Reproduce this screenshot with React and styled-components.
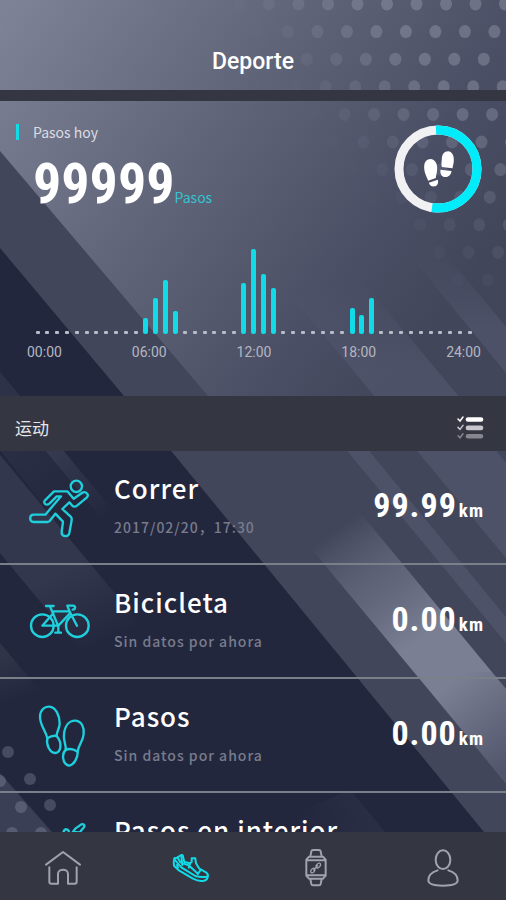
import React from 'react';
import styled, { createGlobalStyle } from 'styled-components';

const GlobalStyle = createGlobalStyle`
  :root {
    --color-accent: #12dbe8;
    --color-bar: #343642;
    --color-white: #fff;
    --color-muted: #787c8c;
    --font-cjk: 'Noto Sans CJK SC', 'Noto Sans', sans-serif;
    --font-digits: 'Roboto Condensed', 'Noto Sans CJK SC', sans-serif;
  }

  * {
    box-sizing: border-box;
  }

  body {
    margin: 0;
    background-color: #23273e;
    font-family: var(--font-cjk);
    color: var(--color-white);
  }

  h1, h2, h3, p, ul {
    margin: 0;
    padding: 0;
  }
`;

const Wrapper = styled.div`
  position: relative;
  display: flex;
  flex-direction: column;
  width: 100%;
  height: 100vh;
  overflow: hidden;
`;

const Backdrop = styled.svg`
  position: absolute;
  top: 0;
  left: 0;
  width: 100%;
  height: 100%;
  z-index: -1;
`;

const Header = styled.header`
  flex: none;
  display: flex;
  justify-content: center;
  padding: 48px 16px 14px;
  border-bottom: 11px solid var(--color-bar);
`;

const Title = styled.h1`
  font-family: Roboto, sans-serif;
  font-size: 23px;
  font-weight: 500;
  line-height: 28px;
`;

const Summary = styled.section`
  flex: none;
  display: flex;
  flex-direction: column;
  padding: 23px 23px 35px 16px;
`;

const SummaryTop = styled.div`
  display: flex;
  justify-content: space-between;
  align-items: flex-start;
  height: 124px;
`;

const SummaryLabel = styled.h2`
  display: flex;
  align-items: center;
  gap: 14px;
  font-size: 14px;
  font-weight: 400;
  line-height: 16px;
  color: #dcdde3;

  &::before {
    content: '';
    width: 3px;
    height: 16px;
    background-color: var(--color-accent);
  }
`;

const Steps = styled.p`
  display: flex;
  align-items: baseline;
  padding: 12px 0 0 17px;
  font-family: var(--font-digits);
  font-size: 56px;
  font-weight: 700;
  line-height: 64px;
`;

const StepsUnit = styled.span`
  font-family: var(--font-cjk);
  font-size: 14px;
  font-weight: 400;
  line-height: 20px;
  color: #35c3cf;
`;

const Ring = styled.svg`
  flex: none;
  width: 90px;
  height: 90px;
`;

const Chart = styled.div`
  display: flex;
  justify-content: space-between;
  align-items: flex-end;
  height: 86px;
  padding: 0 10px 0 19px;
`;

const Slot = styled.span`
  display: flex;
  justify-content: center;
  align-items: flex-end;
  width: 5px;
`;

const Bar = styled.span`
  width: 5px;
  border-radius: 2px;
  background-color: var(--color-accent);
`;

const Dot = styled.span`
  width: 4px;
  height: 3px;
  border-radius: 1px;
  background-color: #b9bbc6;
`;

const Hours = styled.div`
  display: flex;
  justify-content: space-between;
  padding: 9px 2px 0 11px;
  font-family: Roboto, sans-serif;
  font-size: 14px;
  line-height: 18px;
  color: #b4b6c0;
`;

const SectionBar = styled.div`
  flex: none;
  display: flex;
  justify-content: space-between;
  align-items: center;
  min-height: 55px;
  padding: 8px 22px 0 15px;
  background-color: var(--color-bar);
`;

const SectionTitle = styled.h2`
  font-size: 17px;
  font-weight: 400;
  line-height: 24px;
  color: #e6e6ea;
`;

const IconButton = styled.button`
  display: flex;
  padding: 0;
  border: none;
  background: none;
  cursor: pointer;
`;

const List = styled.ul`
  flex: 1;
  min-height: 0;
  overflow-y: auto;
  scrollbar-width: none;
  list-style: none;
`;

const Row = styled.li`
  display: flex;
  align-items: center;
  height: 114px;
  padding-right: 22px;
  border-bottom: 2px solid #7b8088;
`;

const RowIcon = styled.svg`
  flex: none;
  width: 64px;
  height: 64px;
  margin: 0 22px 0 28px;
  fill: none;
  stroke: #1fd0dc;
  stroke-width: 7;
  stroke-linecap: round;
  stroke-linejoin: round;
`;

const RowText = styled.div`
  flex: 1;
  align-self: flex-start;
  padding-top: 17px;
`;

const RowTitle = styled.h3`
  font-size: 26px;
  font-weight: 500;
  line-height: 40px;
  letter-spacing: 1px;
`;

const RowNote = styled.p`
  padding-top: 7px;
  font-size: 14px;
  font-weight: 500;
  line-height: 24px;
  letter-spacing: 1px;
  color: var(--color-muted);
`;

const Value = styled.p`
  padding-top: 2px;
  font-family: var(--font-digits);
  font-size: 34px;
  font-weight: 700;
  line-height: 40px;
  letter-spacing: 1px;
`;

const Unit = styled.span`
  padding-left: 2px;
  font-size: 19px;
`;

const Nav = styled.nav`
  flex: none;
  display: grid;
  grid-template-columns: repeat(4, 1fr);
  height: 68px;
  padding: 4px 0 0;
  background-color: var(--color-bar);
`;

const NavLink = styled.a`
  display: flex;
  align-items: center;
  justify-content: center;
  color: ${({ $active }) => ($active ? 'var(--color-accent)' : '#a0a3ae')};
`;

const NavIcon = styled.svg`
  width: 40px;
  height: 40px;
  fill: none;
  stroke: currentColor;
  stroke-width: 6;
  stroke-linecap: round;
  stroke-linejoin: round;
`;

const activity = {
  11: 16, 12: 36, 13: 54, 14: 23,
  21: 51, 22: 85, 23: 60, 24: 46,
  32: 26, 33: 19, 34: 36,
};
const slots = Array.from({ length: 45 }, (_, i) => activity[i] || 0);
const hours = ['00:00', '06:00', '12:00', '18:00', '24:00'];

// halftone pattern, each line shifted left and starting further right
const dots = [];
for (let row = 0; row < 11; row++) {
  const y = 4 + row * 27.6;
  const start = 225 + row * 20;
  for (let col = -4; col < 10; col++) {
    const x = 505 - row * 10.6 - col * 29.5;
    if (x > start && x < 515) {
      const strength = row < 4 ? 0.36 : 0.32 - (row - 4) * 0.03;
      dots.push({ x, y, o: Math.min(1, (x - start) / 150) * strength });
    }
  }
}
const cornerDots = [[8, 752], [0, 781], [30, 779], [21, 807], [50, 805], [12, 833], [41, 833]];

const Scene = () => (
  <Backdrop viewBox='0 0 506 900' preserveAspectRatio='none' aria-hidden='true'>
    <defs>
      <linearGradient id='sky' gradientUnits='userSpaceOnUse' x1='0' y1='20' x2='430' y2='330'>
        <stop offset='0' stopColor='#7e8296' />
        <stop offset='0.45' stopColor='#606478' />
        <stop offset='0.8' stopColor='#4a4f65' />
        <stop offset='1' stopColor='#42465b' />
      </linearGradient>
      <linearGradient id='beam' gradientUnits='userSpaceOnUse' x1='350' y1='520' x2='450' y2='660'>
        <stop offset='0' stopColor='#7d8195' stopOpacity='0' />
        <stop offset='0.45' stopColor='#6a6e83' stopOpacity='0.8' />
        <stop offset='0.8' stopColor='#7b7f94' />
        <stop offset='1' stopColor='#7b7f94' />
      </linearGradient>
      <linearGradient id='beamEnd' gradientUnits='userSpaceOnUse' x1='455' y1='680' x2='520' y2='760'>
        <stop offset='0' stopColor='#50556b' stopOpacity='0' />
        <stop offset='1' stopColor='#50556b' />
      </linearGradient>
      <linearGradient id='streak' gradientUnits='userSpaceOnUse' x1='0' y1='280' x2='0' y2='370'>
        <stop offset='0' stopColor='#545970' stopOpacity='0' />
        <stop offset='1' stopColor='#545970' stopOpacity='0.6' />
      </linearGradient>
      <linearGradient id='streakRight' gradientUnits='userSpaceOnUse' x1='0' y1='250' x2='0' y2='330'>
        <stop offset='0' stopColor='#545970' stopOpacity='0' />
        <stop offset='1' stopColor='#545970' stopOpacity='0.6' />
      </linearGradient>
      <linearGradient id='fadeDown' gradientUnits='userSpaceOnUse' x1='20' y1='500' x2='90' y2='650'>
        <stop offset='0' stopColor='#33374d' />
        <stop offset='0.5' stopColor='#33374d' />
        <stop offset='1' stopColor='#33374d' stopOpacity='0' />
      </linearGradient>
      <linearGradient id='fadeEdge' gradientUnits='userSpaceOnUse' x1='0' y1='452' x2='70' y2='520'>
        <stop offset='0' stopColor='#2b2f45' />
        <stop offset='1' stopColor='#2b2f45' stopOpacity='0' />
      </linearGradient>
      <linearGradient id='fadeThin' gradientUnits='userSpaceOnUse' x1='50' y1='452' x2='105' y2='520'>
        <stop offset='0' stopColor='#363a50' />
        <stop offset='1' stopColor='#363a50' stopOpacity='0' />
      </linearGradient>
      <linearGradient id='fadeLow' gradientUnits='userSpaceOnUse' x1='0' y1='660' x2='15' y2='700'>
        <stop offset='0' stopColor='#303449' />
        <stop offset='1' stopColor='#303449' stopOpacity='0' />
      </linearGradient>
      <linearGradient id='fadeFoot' gradientUnits='userSpaceOnUse' x1='370' y1='815' x2='300' y2='835'>
        <stop offset='0' stopColor='#2a2e45' />
        <stop offset='1' stopColor='#2a2e45' stopOpacity='0' />
      </linearGradient>
    </defs>
    <rect width='506' height='430' fill='url(#sky)' />
    <path d='M293 298 L358 276 L460 398 L376 398 Z' fill='url(#streak)' />
    <path d='M406 250 L440 247 L506 327 V373 Z' fill='url(#streakRight)' />
    <path d='M0 151 L208 396 L240 430 H0 Z' fill='#42465b' />
    <rect y='430' width='506' height='470' fill='#42465b' />
    <path d='M348 430 H370 V452 L506 617 V643 L348 452 Z' fill='#4e5268' />
    <path d='M418 430 H497 V452 L506 463 V558 L418 452 Z' fill='#4e5268' />
    <path d='M310 452 L506 689 V783 L231 452 Z' fill='url(#beam)' />
    <path d='M410 670 L492 672 L506 689 V783 Z' fill='url(#beamEnd)' />
    <path d='M0 248 L124 396 L172 452 L484 832 H0 Z' fill='#23273e' />
    <path d='M0 372 L22 398 H0 Z' fill='#2e3248' />
    <path d='M0 450 H47 L107 525 H60 Z' fill='url(#fadeEdge)' />
    <path d='M45 450 H63 L125 525 H107 Z' fill='url(#fadeThin)' />
    <path d='M0 455 L170 660 L105 680 L0 553 Z' fill='url(#fadeDown)' />
    <path d='M0 643 L60 715 L0 720 Z' fill='url(#fadeLow)' />
    <path d='M350 790 L385 832 H250 Z' fill='url(#fadeFoot)' />
    <path d='M0 773 L52 832 H0 Z' fill='#3b3f55' />
    {dots.map(({ x, y, o }) => (
      <ellipse key={`${x}-${y}`} cx={x} cy={y} rx='6' ry='6.5' fill='#a5a9bd' opacity={o} />
    ))}
    {cornerDots.map(([x, y]) => (
      <circle key={`${x}-${y}`} cx={x} cy={y} r='6' fill='#a5a9bd' opacity='0.28' />
    ))}
  </Backdrop>
);

const StepsRing = () => (
  <Ring viewBox='0 0 90 90' role='img' aria-label='Pasos'>
    <circle cx='45' cy='45' r='39' fill='none' stroke='#f1f1f3' strokeWidth='9' />
    <path d='M43 6 A39 39 0 1 1 39 83.500' fill='none' stroke='#00ecfb' strokeWidth='9' />
    <g fill='#fff' transform='translate(-12.500 -13) scale(.3333)'>
      <path d='M131 168 C131 152 139 144 150 144 C164 145 171 158 170 174 C170 186 166 194 166 201 L143 209 C138 196 131 185 131 168 Z' />
      <path d='M145 215 L172 206 C175 216 170 225 162 226 C153 227 147 223 145 215 Z' />
      <path d='M184 145 C184 130 191 121 203 121 C214 122 221 133 220 148 C220 158 217 165 216 172 L184 168 C182 160 183 153 184 145 Z' />
      <path d='M180 176 L213 180 C212 191 204 199 194 198 C184 198 178 188 180 176 Z' />
    </g>
  </Ring>
);

const RunIcon = () => (
  <RowIcon viewBox='54 45 192 192'>
    <circle cx='199' cy='79' r='17' />
    <path d='M105 121 L132 94 H172 L191 116 L217 98 C228 93 239 104 230 113 L201 137 Q193 143 186 136 L178 127 L157 147 L182 170 Q186 174 185 181 L178 219 C175 233 154 231 155 216 L159 185 L136 161 L119 183 Q116 186 112 186 H71 C57 186 57 164 71 164 H106 L153 109 H140 L119 130 C109 139 98 130 105 121 Z' />
  </RowIcon>
);

const BikeIcon = () => (
  <RowIcon viewBox='54 -2 192 192'>
    <circle cx='97' cy='108' r='34' />
    <circle cx='202' cy='108' r='34' />
    <path d='M108 49 H131 M120 50 L128 69 L145 110 M128 65 H178 M130 71 L97 108 H145 L180 71 M136 129 H153 M145 110 V128' />
    <path d='M178 64 L172 48 H189 C198 48 197 59 188 60 M178 64 L201 108' />
  </RowIcon>
);

const FeetIcon = () => (
  <RowIcon viewBox='54 337 192 192'>
    <path d='M112 443 C108 420 89 404 90 377 C91 358 103 347 118 348 C138 350 149 375 149 398 C149 415 139 424 140 436 C132 434 121 437 112 443 Z' />
    <path d='M112 443 C108 462 119 486 136 487 C153 485 158 457 140 436' />
    <path d='M167 478 C169 459 159 451 162 430 C165 405 178 389 197 390 C215 392 223 409 221 430 C219 453 205 463 203 483 C192 476 177 473 167 478 Z' />
    <path d='M167 478 C155 488 156 520 177 525 C193 523 204 499 203 483' />
  </RowIcon>
);

const TreadmillIcon = () => (
  <RowIcon viewBox='84 47 192 192'>
    <path d='M185 114 L190 93 C194 80 205 82 207 92 L207 108 L226 82 L244 69 C253 66 256 74 250 80 L228 106 L216 122 M222 90 L238 94' />
  </RowIcon>
);

const ListIcon = () => (
  <svg width='28' height='24' viewBox='0 0 28 24' fill='none' strokeLinecap='round'>
    {['#fff', '#c6c6cc', '#858690'].map((color, i) => (
      <g key={color} stroke={color} transform={`translate(0 ${i * 8.4})`}>
        <path d='M2 3 L4 5 L7 1' strokeWidth='1.500' />
        <path d='M12 3.500 H25' strokeWidth='4.600' />
      </g>
    ))}
  </svg>
);

const HomeIcon = () => (
  <NavIcon viewBox='132 143 120 120'>
    <path d='M141 193 L192 155 L243 193 M151 201 V244 Q151 250 157 250 H177 V221 C177 204 207 204 207 221 V250 H227 Q233 250 233 244 V201' />
  </NavIcon>
);

const ShoeIcon = () => (
  <NavIcon viewBox='514 139 120 120'>
    <path d='M527 170 L535 168 L548 160 L552 161 L557 181 L574 185 L579 181 V170 L590 170 L592 185 L602 201 L622 212 Q630 217 627 227 Q623 238 611 238 Q598 239 583 231 L542 207 L526 192 Q524 181 527 170 Z' />
    <path d='M528 174 L548 197 L590 223 Q607 228 625 225 M537 168 L545 182 L570 191 L588 207 L598 217 M548 165 L551 190 M574 187 L570 198 M606 205 L598 216 M535 190 L538 198' />
  </NavIcon>
);

const WatchIcon = () => (
  <NavIcon viewBox='138 141 120 120'>
    <path d='M181 166 L184 151 Q185 147 189 147 H207 Q211 147 212 151 L215 166 M181 234 L184 249 Q185 253 189 253 H207 Q211 253 212 249 L215 234' />
    <path d='M177 167 H219 L227 176 V224 L219 233 H177 L169 224 V176 Z M171 178 H225 M171 223 H225' />
    <path d='M184 215 C177 209 190 199 193 202 C199 206 189 219 184 215 Z M200 200 C193 194 206 184 210 187 C216 192 205 204 200 200 Z M191 207 L203 194' strokeWidth='4' />
  </NavIcon>
);

const UserIcon = () => (
  <NavIcon viewBox='521 140 120 120'>
    <ellipse cx='581' cy='175' rx='22' ry='28' />
    <path d='M565 207 C545 213 537 221 537 237 C537 248 557 253 581 253 C605 253 625 248 625 237 C625 221 617 213 597 207' />
  </NavIcon>
);

const sports = [
  { title: 'Correr', note: '2017/02/20，17:30', value: '99.99', Icon: RunIcon },
  { title: 'Bicicleta', note: 'Sin datos por ahora', value: '0.00', Icon: BikeIcon },
  { title: 'Pasos', note: 'Sin datos por ahora', value: '0.00', Icon: FeetIcon },
  { title: 'Pasos en interior', Icon: TreadmillIcon },
];

const tabs = [
  { label: 'Inicio', href: '#inicio', Icon: HomeIcon },
  { label: 'Deporte', href: '#deporte', Icon: ShoeIcon, active: true },
  { label: 'Reloj', href: '#reloj', Icon: WatchIcon },
  { label: 'Perfil', href: '#perfil', Icon: UserIcon },
];

const App = () => {
  return (
    <>
      <GlobalStyle />
      <Wrapper>
        <Scene />
        <Header>
          <Title>Deporte</Title>
        </Header>

        <Summary>
          <SummaryTop>
            <div>
              <SummaryLabel>Pasos hoy</SummaryLabel>
              <Steps>
                99999<StepsUnit>Pasos</StepsUnit>
              </Steps>
            </div>
            <StepsRing />
          </SummaryTop>
          <Chart>
            {slots.map((height, i) => (
              <Slot key={i}>
                {height > 0 ? <Bar style={{ height }} /> : <Dot />}
              </Slot>
            ))}
          </Chart>
          <Hours>
            {hours.map((hour) => (
              <span key={hour}>{hour}</span>
            ))}
          </Hours>
        </Summary>

        <SectionBar>
          <SectionTitle>运动</SectionTitle>
          <IconButton type='button' aria-label='Lista'>
            <ListIcon />
          </IconButton>
        </SectionBar>

        <List>
          {sports.map(({ title, note, value, Icon }) => (
            <Row key={title}>
              <Icon />
              <RowText>
                <RowTitle>{title}</RowTitle>
                {note && <RowNote>{note}</RowNote>}
              </RowText>
              {value && (
                <Value>
                  {value}
                  <Unit>km</Unit>
                </Value>
              )}
            </Row>
          ))}
        </List>

        <Nav>
          {tabs.map(({ label, href, Icon, active }) => (
            <NavLink key={label} href={href} aria-label={label} $active={active}>
              <Icon />
            </NavLink>
          ))}
        </Nav>
      </Wrapper>
    </>
  );
};

export default App;
